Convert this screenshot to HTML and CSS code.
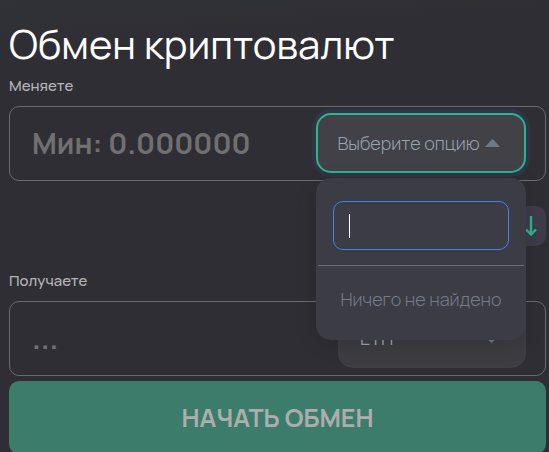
FILE: index.html
```html
<!DOCTYPE html>
<html lang="ru">
<head>
    <meta charset="UTF-8">
    <meta name="viewport" content="width=device-width, initial-scale=1.0">
    <title>Обмен криптовалют</title>
    <link rel="stylesheet" href="styles.css">
</head>
<body>
<main class="exchange">
  <h1 class="title">Обмен криптовалют</h1>

  <form class="form">
    <label class="label" for="give">Меняете</label>
    <div class="field">
      <input class="amount" id="give" type="text" placeholder="Мин: 0.000000">
      <div class="picker">
        <button class="picker__toggle" type="button" aria-haspopup="listbox" aria-expanded="true">
          Выберите опцию
          <svg class="caret-up" viewBox="0 0 15 8" aria-hidden="true"><path d="M0 8 6.5 .7Q7.500 -.3 8.500 .7L15 8Z" /></svg>
        </button>

        <!-- dropdown, lies over the form -->
        <div class="menu">
          <div class="search">
            <input class="search__input" type="text" aria-label="Поиск">
            <span class="search__cursor"></span>
          </div>
          <p class="menu__empty">Ничего не найдено</p>
        </div>
      </div>
    </div>

    <div class="swap-row">
      <button class="swap" type="button" aria-label="Поменять местами">
        <svg viewBox="0 0 12 20" aria-hidden="true"><path d="M6 0V18M1 13.500 6 18.500 11 13.500" /></svg>
      </button>
    </div>

    <label class="label" for="get">Получаете</label>
    <div class="field">
      <input class="amount" id="get" type="text" placeholder="...">
      <div class="coin">
        <select class="coin__select" aria-label="Валюта">
          <option>ETH</option>
        </select>
        <svg class="coin__arrow" viewBox="0 0 15 8" aria-hidden="true"><path d="M0 0 6.500 7.300Q7.500 8.300 8.500 7.300L15 0Z" /></svg>
      </div>
    </div>

    <button class="submit" type="submit">НАЧАТЬ ОБМЕН</button>
  </form>
</main>
</body>
</html>
```
FILE: styles.css
```css
:root {
  --bg: #2f2e34;
  --line: #69696e;
  --panel: #3c3c44;
  --green: #2db38e;
  --muted: #757c8a;
}

* {
  box-sizing: border-box;
}

body {
  margin: 0;
  color: #fff;
  background: linear-gradient(176deg, #303236, var(--bg) 50px) no-repeat var(--bg);
  font-family: Manrope, Inter, "Liberation Sans", sans-serif;
}

button,
input,
select {
  font: inherit;
}

.exchange {
  padding: 19px 3px 0 9px;
}

.title {
  margin: 0;
  font-size: 40px;
  line-height: 50px;
  font-weight: 400;
}

.form {
  display: flex;
  flex-direction: column;
}

.label {
  padding: 5px 0 8px;
  color: #b5b5b8;
  font-size: 15px;
  line-height: 24px;
  font-weight: 500;
}

.field {
  display: flex;
  align-items: center;
  height: 75px;
  padding: 0 19px 1px 22px;
  border: 1px solid var(--line);
  border-radius: 10px;
}

.amount {
  flex: 1;
  min-width: 0;
  padding: 0;
  border: 0;
  outline: 0;
  color: #fff;
  background: none;
  font-size: 29px;
  line-height: 40px;
  font-weight: 700;
}

.amount::placeholder {
  color: #707071;
  opacity: 1;
}

.picker {
  position: relative;
  width: 210px;
}

.picker__toggle {
  display: flex;
  align-items: center;
  justify-content: center;
  gap: 5px;
  width: 100%;
  height: 60px;
  padding: 0 5px 0 0;
  border: 2px solid var(--green);
  border-radius: 15px;
  color: #9aa3b0;
  background: #424147;
  box-shadow: 0 0 0 4px #303546;
  font-size: 18px;
  font-weight: 300;
  white-space: nowrap;
}

.caret-up {
  width: 15px;
  height: 8px;
  fill: #707886;
}

.menu {
  position: absolute;
  z-index: 2;
  top: 100%;
  left: 0;
  width: 100%;
  margin-top: 5px;
  padding: 0 2px;
  border-radius: 15px;
  background: var(--panel);
  box-shadow: 0 4px 20px rgba(0, 0, 0, 0.15);
}

.search {
  position: relative;
  padding: 23px 15px 15px;
  border-bottom: 1px solid #6b6b71;
}

.search__input {
  display: block;
  width: 100%;
  height: 49px;
  padding: 0 16px;
  border: 1px solid #3b82f6;
  border-radius: 10px;
  outline: 0;
  color: #fff;
  background: none;
}

.search__cursor {
  position: absolute;
  top: 36px;
  left: 31px;
  width: 1px;
  height: 24px;
  background: #fff;
}

.menu__empty {
  margin: 0;
  padding: 21px 0 29px;
  color: var(--muted);
  font-size: 18px;
  font-weight: 300;
  line-height: 24px;
  text-align: center;
  white-space: nowrap;
}

.swap-row {
  display: flex;
  justify-content: flex-end;
  padding: 25px 0 18px;
}

.swap {
  display: grid;
  place-items: center;
  width: 30px;
  height: 40px;
  padding: 0;
  border: 0;
  border-radius: 10px;
  background: #3e3c4b;
}

.swap svg {
  width: 12px;
  height: 20px;
  fill: none;
  stroke: var(--green);
  stroke-width: 2.4;
}

.coin {
  position: relative;
  width: 188px;
}

.coin__select {
  display: block;
  width: 100%;
  height: 60px;
  padding: 0 20px;
  border: 2px solid #3f3e43;
  border-radius: 15px;
  appearance: none;
  color: #9aa3b0;
  background: #3d3c41;
  font-size: 18px;
}

.coin__arrow {
  position: absolute;
  top: 27px;
  right: 27px;
  width: 15px;
  height: 8px;
  fill: #707886;
}

.submit {
  height: 73px;
  margin-top: 5px;
  border: 0;
  border-radius: 10px;
  color: #adadae;
  background: #3b7c6a;
  font-size: 25px;
  font-weight: 700;
}
```
